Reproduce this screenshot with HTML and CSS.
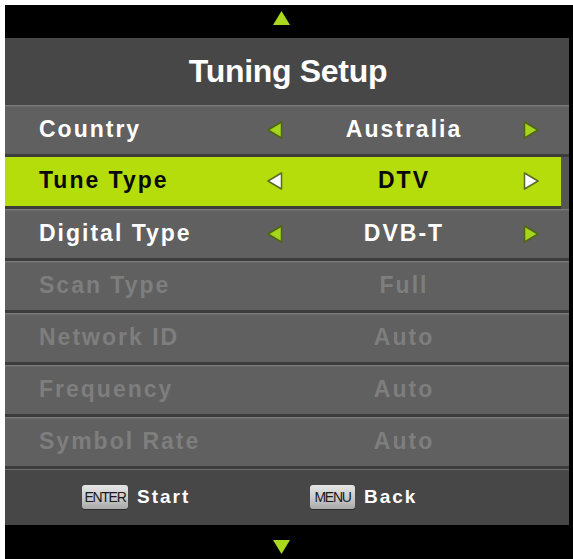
FILE: index.html
```html
<!DOCTYPE html>
<html>
<head>
<meta charset="utf-8">
<title>Tuning Setup</title>
<link rel="stylesheet" href="styles.css">
</head>
<body>
<div class="frame">
  <div class="band band-top">
    <svg class="tri" width="19" height="16" viewBox="0 0 19 16"><polygon points="9.5,1 18,15 1,15"/></svg>
  </div>
  <div class="panel">
    <div class="title">Tuning Setup</div>

    <div class="row">
      <span class="label">Country</span>
      <svg class="arr" viewBox="0 0 20 20"><polygon points="16.5,2 3,10 16.5,18"/></svg>
      <span class="value">Australia</span>
      <svg class="arr" viewBox="0 0 20 20"><polygon points="3.5,2 17,10 3.5,18"/></svg>
    </div>

    <div class="row sel">
      <span class="label">Tune Type</span>
      <svg class="arr" viewBox="0 0 20 20"><polygon points="16.5,2 3,10 16.5,18"/></svg>
      <span class="value">DTV</span>
      <svg class="arr" viewBox="0 0 20 20"><polygon points="3.5,2 17,10 3.5,18"/></svg>
    </div>

    <div class="row">
      <span class="label">Digital Type</span>
      <svg class="arr" viewBox="0 0 20 20"><polygon points="16.5,2 3,10 16.5,18"/></svg>
      <span class="value">DVB-T</span>
      <svg class="arr" viewBox="0 0 20 20"><polygon points="3.5,2 17,10 3.5,18"/></svg>
    </div>

    <div class="row dim">
      <span class="label">Scan Type</span>
      <span class="gap"></span>
      <span class="value">Full</span>
    </div>

    <div class="row dim">
      <span class="label">Network ID</span>
      <span class="gap"></span>
      <span class="value">Auto</span>
    </div>

    <div class="row dim">
      <span class="label">Frequency</span>
      <span class="gap"></span>
      <span class="value">Auto</span>
    </div>

    <div class="row dim">
      <span class="label">Symbol Rate</span>
      <span class="gap"></span>
      <span class="value">Auto</span>
    </div>

    <div class="footer">
      <div class="hint"><span class="key key-enter">ENTER</span><span class="act">Start</span></div>
      <div class="hint"><span class="key key-menu">MENU</span><span class="act">Back</span></div>
    </div>
  </div>
  <div class="band band-bottom">
    <svg class="tri" width="19" height="16" viewBox="0 0 19 16"><polygon points="1,1 18,1 9.5,15"/></svg>
  </div>
</div>
</body>
</html>
```

FILE: styles.css
```css
html, body {
  margin: 0;
  padding: 0;
  background: #ffffff;
}

body {
  font-family: "Liberation Sans", Arial, sans-serif;
}

.frame {
  margin: 5px 0 0 5px;
  width: 568px;
  height: 554px;
  background: #000000;
  display: flex;
  flex-direction: column;
}

.band {
  display: flex;
  align-items: flex-start;
  justify-content: center;
  padding-right: 16px;
  flex: none;
  box-sizing: border-box;
}

.band-top {
  height: 33px;
  padding-top: 5px;
}

.band-bottom {
  height: 34px;
  padding-top: 14px;
}

.tri {
  display: block;
}

.tri polygon {
  fill: #a9d81d;
}

.panel {
  width: 564px;
  background: #474747;
  display: flex;
  flex-direction: column;
  flex: none;
}

.title {
  height: 67px;
  display: flex;
  align-items: center;
  justify-content: center;
  color: #ffffff;
  font-weight: bold;
  font-size: 32px;
  letter-spacing: -0.3px;
  padding-left: 2px;
  box-sizing: border-box;
}

.row {
  height: 52px;
  box-sizing: border-box;
  padding: 2px 0 5px 0;
  display: grid;
  grid-template-columns: 260px 20px 1fr 20px 28px;
  align-items: center;
  background:
    linear-gradient(to bottom, #7a7a7a 0, #7a7a7a 1px, #6a6a6a 1px, #6a6a6a 2px, #606060 2px, #606060 49px, #3c3c3c 49px, #3c3c3c 52px);
  color: #ffffff;
  font-weight: bold;
  font-size: 23px;
  letter-spacing: 2px;
}

.row.sel {
  padding-top: 0;
  background:
    linear-gradient(to bottom, #b5dc0b 0, #b5dc0b 49px, #3c3c3c 49px, #3c3c3c 52px);
  color: #0a0a0a;
  box-shadow: inset -8px 0 0 #555555;
}

.row.dim {
  color: #7e7e7e;
}

.label {
  padding-left: 34px;
  white-space: nowrap;
}

.value {
  text-align: center;
  white-space: nowrap;
  padding-left: 2px;
}

.gap {
  display: block;
}

.arr {
  display: block;
  width: 20px;
  height: 20px;
}

.arr polygon {
  fill: #a5d61c;
  stroke: #4e6612;
  stroke-width: 1.5;
  stroke-linejoin: round;
}

.row.sel .arr polygon {
  fill: #ffffff;
  stroke: #5a6a2a;
}

.footer {
  height: 56px;
  box-sizing: border-box;
  border-top: 1px solid #6e6e6e;
  display: grid;
  grid-template-columns: 228px auto;
  align-items: center;
  padding: 0 0 2px 77px;
  justify-content: start;
}

.hint {
  display: flex;
  align-items: center;
  gap: 9px;
}

.key {
  height: 24px;
  box-sizing: border-box;
  border-radius: 3px;
  background: linear-gradient(to bottom, #e6e6e6, #c6c6c6 60%, #a9a9a9);
  box-shadow: 0 1px 0 #2e2e2e;
  color: #1a1a1a;
  font-size: 14px;
  letter-spacing: -1.3px;
  display: flex;
  align-items: center;
  justify-content: center;
}

.key-enter {
  width: 46px;
}

.key-menu {
  width: 45px;
}

.act {
  color: #ffffff;
  font-weight: bold;
  font-size: 19px;
  letter-spacing: 2px;
}
```
